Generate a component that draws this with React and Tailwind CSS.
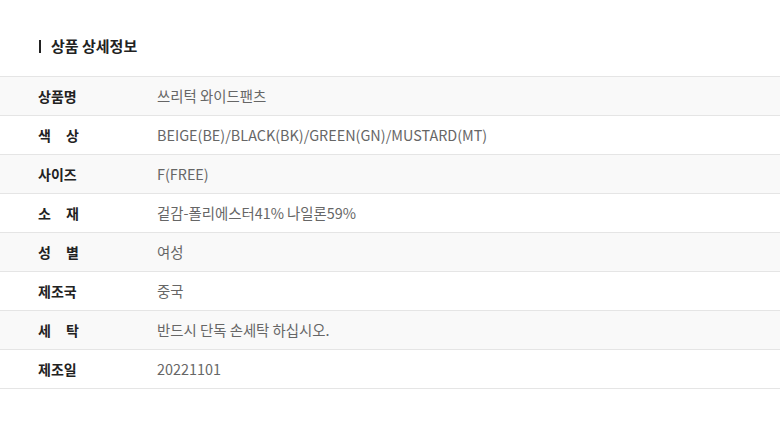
import React from "react";

const rows = [
  { label: "상품명", value: "쓰리턱 와이드팬츠" },
  { label: "색상", value: "BEIGE(BE)/BLACK(BK)/GREEN(GN)/MUSTARD(MT)" },
  { label: "사이즈", value: "F(FREE)" },
  { label: "소재", value: "겉감-폴리에스터41% 나일론59%" },
  { label: "성별", value: "여성" },
  { label: "제조국", value: "중국" },
  { label: "세탁", value: "반드시 단독 손세탁 하십시오." },
  { label: "제조일", value: "20221101" },
];

const App = () => {
  return (
    <div
      className="w-[780px] h-[427px] bg-white overflow-hidden"
      style={{ fontFamily: '"Noto Sans CJK KR", "Noto Sans", sans-serif' }}
    >
      {/* title */}
      <div className="pt-[36px] pl-[39px] h-[76px] flex items-start">
        <div className="flex items-center gap-[10px] text-[15px] font-bold text-[#222] leading-[20px]">
          <span className="w-[2px] h-[13px] bg-[#222]" />
          상품 상세정보
        </div>
      </div>

      {/* table */}
      <div className="border-t border-[#e5e5e5]">
        {rows.map((row, i) => (
          <div
            key={row.label}
            className={
              "flex items-center h-[39px] border-b border-[#e5e5e5] " +
              (i % 2 === 0 ? "bg-[#f9f9f9]" : "bg-white")
            }
          >
            <div className="w-[157px] pl-[38px] shrink-0 text-[14px]">
              {row.label.length === 2 ? (
                <div className="w-[41px] flex justify-between font-bold text-[#222]">
                  <span>{row.label[0]}</span>
                  <span>{row.label[1]}</span>
                </div>
              ) : (
                <span className="font-bold text-[#222]">{row.label}</span>
              )}
            </div>
            <div className="text-[14.4px] text-[#666]">{row.value}</div>
          </div>
        ))}
      </div>
    </div>
  );
};

export default App;
